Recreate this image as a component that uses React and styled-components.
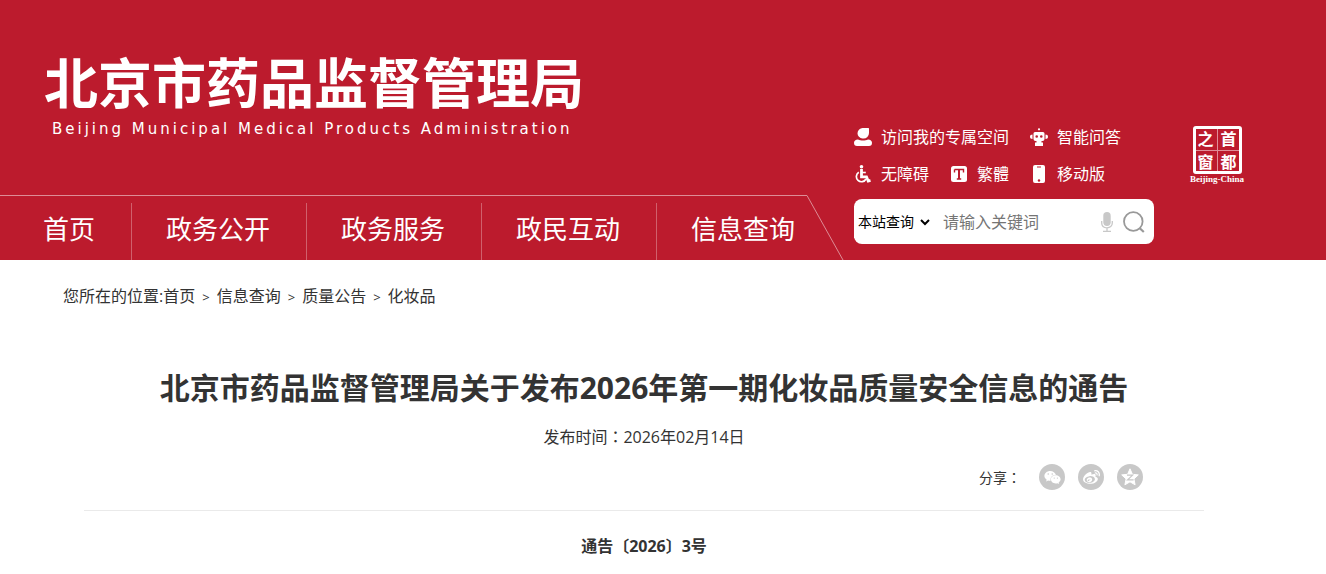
import React from "react";
import styled, { createGlobalStyle } from "styled-components";
import { FaWeibo, FaWeixin } from "react-icons/fa";

const navItems = ["首页", "政务公开", "政务服务", "政民互动", "信息查询"];

const crumbs = ["首页", "信息查询", "质量公告", "化妆品"];

const UserIcon = () => (
  <svg width="18" height="18" viewBox="0 0 18 18" fill="#fff" aria-hidden="true">
    <path d="M9 0h5.4c.4 0 .6.2.6.6V5a5.500 5.500 0 0 1-5.500 5.500H8.500A5.300 5.300 0 0 1 3.500 5.200 5.300 5.300 0 0 1 9 0z" />
    <path d="M4 11.500c1.500.7 3 1 5 1s3.500-.3 5-1c2.500.1 4 1.300 4 3.200 0 2.200-1 3.300-3 3.300H3c-2 0-3-1.100-3-3.300 0-1.900 1.500-3.100 4-3.200z" />
  </svg>
);

const RobotIcon = () => (
  <svg width="18" height="18" viewBox="0 0 18 18" fill="#fff" aria-hidden="true">
    <circle cx="9" cy="1.300" r="1.100" />
    <path
      fillRule="evenodd"
      d="M5 4h8a1.500 1.500 0 0 1 1.500 1.500V11a2 2 0 0 1-2 2h-7a2 2 0 0 1-2-2V5.500A1.500 1.500 0 0 1 5 4zm1.700 3.200a1.300 1.300 0 1 0 0 2.600 1.300 1.300 0 0 0 0-2.600zm4.600 0a1.300 1.300 0 1 0 0 2.600 1.300 1.300 0 0 0 0-2.600z"
    />
    <path d="M2.500 6.500v4.500C1 11 0 10 0 8.700s1-2.200 2.500-2.200zM15.500 6.500v4.500c1.500 0 2.500-1 2.500-2.300s-1-2.200-2.500-2.200zM6.500 13h5v1.500H13V18H5v-3.500h1.500z" />
  </svg>
);

const WheelchairIcon = () => (
  <svg width="18" height="18" viewBox="0 0 18 18" fill="none" stroke="#fff" aria-hidden="true">
    <circle cx="7.500" cy="1.800" r="1.800" fill="#fff" stroke="none" />
    <path d="M7.500 4v7.800h5l1.700 4.200 2.300-.7" strokeWidth="2.800" />
    <path d="M7.500 7.500h4.300" strokeWidth="1.600" />
    <path d="M4.800 7.300A5.100 5.100 0 1 0 12 14" strokeWidth="1.700" />
  </svg>
);

const TextIcon = () => (
  <svg width="18" height="18" viewBox="0 0 18 18" aria-hidden="true">
    <rect x="1" y="1" width="16" height="16" rx="2.500" fill="#fff" />
    <path
      d="M4.500 4.500h9v3M4.500 4.500v3M9 4.500v9.500M6.800 14h4.400"
      stroke="#bc1b2d"
      strokeWidth="1.400"
      fill="none"
    />
    <path d="M8 4.500h2V14H8z" fill="#bc1b2d" />
  </svg>
);

const PhoneIcon = () => (
  <svg width="18" height="18" viewBox="0 0 18 18" aria-hidden="true">
    <rect x="3" y="0" width="12" height="18" rx="2" fill="#fff" />
    <path d="M7 2h4" stroke="#bc1b2d" strokeWidth="1" />
    <circle cx="9" cy="15.500" r="1.200" fill="#bc1b2d" />
  </svg>
);

const MicIcon = () => (
  <svg width="12" height="20" viewBox="0 0 12 20" aria-hidden="true">
    <rect x="2.300" y="0" width="7.400" height="14" rx="3.700" fill="#c8c8c8" />
    <path
      d="M.7 9v2c0 3 2.300 4.800 5.300 4.800s5.300-1.800 5.300-4.800V9M6 16v3M2 19.300h8"
      stroke="#c8c8c8"
      strokeWidth="1.300"
      fill="none"
    />
  </svg>
);

const SearchIcon = () => (
  <svg width="22" height="22" viewBox="0 0 22 22" fill="none" stroke="#999" strokeWidth="1.800" aria-hidden="true">
    <circle cx="10.300" cy="10.500" r="9.300" />
    <path d="M16.500 17l4.300 4" strokeWidth="2.200" />
  </svg>
);

const QzoneIcon = () => (
  <svg width="18" height="18" viewBox="0 0 18 18" aria-hidden="true">
    <path
      d="M9 .8l2.400 5.500 5.900.6-4.400 4 1.200 5.900L9 13.800l-5.100 3 1.200-5.900-4.400-4 5.900-.6z"
      fill="#fff"
      stroke="#fff"
      strokeLinejoin="round"
    />
    <path d="M6 7.200h5.600L6.600 11.800h6" stroke="#c8c8c8" strokeWidth="1.200" fill="none" />
  </svg>
);

const tools = [
  [
    { label: "访问我的专属空间", icon: <UserIcon /> },
    { label: "智能问答", icon: <RobotIcon /> },
  ],
  [
    { label: "无障碍", icon: <WheelchairIcon /> },
    { label: "繁體", icon: <TextIcon /> },
    { label: "移动版", icon: <PhoneIcon /> },
  ],
];

const shares = [
  { label: "微信", icon: <FaWeixin size={17} /> },
  { label: "微博", icon: <FaWeibo size={17} /> },
  { label: "QQ空间", icon: <QzoneIcon /> },
];

const App = () => {
  return (
    <>
      <GlobalStyle />
      <Header>
        <Brand>
          <Logo href="#">
            <LogoName>北京市药品监督管理局</LogoName>
            <LogoSub>Beijing Municipal Medical Products Administration</LogoSub>
          </Logo>
          <Nav>
            <NavList>
              {navItems.map((item) => (
                <NavItem key={item}>
                  <a href="#">{item}</a>
                </NavItem>
              ))}
            </NavList>
            <svg width="38" height="65" viewBox="0 0 38 65" aria-hidden="true">
              <path d="M0 .5L36 65" stroke="#dd8d96" fill="none" />
            </svg>
          </Nav>
        </Brand>
        <Tools>
          {tools.map((row, i) => (
            <ToolRow key={i}>
              {row.map((tool) => (
                <ToolLink href="#" key={tool.label}>
                  {tool.icon}
                  {tool.label}
                </ToolLink>
              ))}
            </ToolRow>
          ))}
          <SearchForm onSubmit={(e) => e.preventDefault()}>
            <Scope aria-label="查询范围">
              <option>本站查询</option>
            </Scope>
            <Keyword type="text" placeholder="请输入关键词" aria-label="关键词" />
            <IconButton type="button" aria-label="语音">
              <MicIcon />
            </IconButton>
            <IconButton type="submit" aria-label="搜索">
              <SearchIcon />
            </IconButton>
          </SearchForm>
        </Tools>
        <Seal href="#">
          <SealGrid>
            <span>之</span>
            <span>首</span>
            <span>窗</span>
            <span>都</span>
          </SealGrid>
          <SealCaption>Beijing-China</SealCaption>
        </Seal>
      </Header>

      <Breadcrumb>
        您所在的位置:
        {crumbs.map((crumb, i) => (
          <React.Fragment key={crumb}>
            {i > 0 && <Arrow>&gt;</Arrow>}
            <a href="#">{crumb}</a>
          </React.Fragment>
        ))}
      </Breadcrumb>

      <Article>
        <Title>北京市药品监督管理局关于发布2026年第一期化妆品质量安全信息的通告</Title>
        <PublishTime>
          发布时间<Colon>：</Colon>2026年02月14日
        </PublishTime>
        <Share>
          <ShareLabel>
            分享<Colon>：</Colon>
          </ShareLabel>
          {shares.map((share) => (
            <ShareButton type="button" key={share.label} aria-label={share.label}>
              {share.icon}
            </ShareButton>
          ))}
        </Share>
        <DocNumber>通告〔2026〕3号</DocNumber>
      </Article>
    </>
  );
};

export default App;

const GlobalStyle = createGlobalStyle`
  * {
    box-sizing: border-box;
  }

  body {
    margin: 0;
    background: #fff;
    color: #333;
    font-family: "Open Sans", "Noto Sans CJK SC", sans-serif;
    font-size: 16px;
    line-height: 24px;
  }

  a {
    color: inherit;
    text-decoration: none;
  }

  svg {
    display: block;
    flex: none;
  }

  button, input, select {
    font-family: inherit;
  }
`;

const Header = styled.header`
  display: flex;
  background: #bc1b2d;
  color: #fff;
  white-space: nowrap;
`;

const Brand = styled.div`
  display: flex;
  flex-direction: column;
  justify-content: space-between;
  padding-top: 51px;
`;

const Logo = styled.a`
  display: block;
  padding-left: 44px;
`;

const LogoName = styled.div`
  font-size: 54px;
  font-weight: 700;
  line-height: 64px;
`;

const LogoSub = styled.div`
  padding-left: 8px;
  font-family: "DejaVu Sans", sans-serif;
  font-size: 15px;
  line-height: 28px;
  letter-spacing: 3px;
`;

const Nav = styled.nav`
  display: flex;
`;

const NavList = styled.ul`
  display: flex;
  height: 65px;
  margin: 0;
  padding: 7px 0 0;
  border-top: 1px solid #dd8d96;
  list-style: none;
`;

const NavItem = styled.li`
  padding: 0 36px 0 34px;
  border-right: 1px solid #d0606c;
  font-size: 26px;
  line-height: 52px;

  &:first-child {
    padding-left: 43px;
  }

  &:last-child {
    padding-right: 12px;
    border-right: 0;
  }
`;

const Tools = styled.div`
  width: 300px;
  margin-left: 9px;
  padding: 125px 0 16px;
`;

const ToolRow = styled.div`
  display: flex;
  gap: 21px;
  margin-bottom: 13px;
`;

const ToolLink = styled.a`
  display: flex;
  align-items: center;
  gap: 9px;
`;

const SearchForm = styled.form`
  display: flex;
  align-items: center;
  gap: 10px;
  height: 45px;
  padding-right: 9px;
  border-radius: 8px;
  background: #fff;
`;

const Scope = styled.select`
  width: 79px;
  height: 32px;
  padding: 0;
  border: 0;
  background: #fff;
  color: #000;
  font-size: 14px;
`;

const Keyword = styled.input`
  flex: 1;
  min-width: 0;
  padding: 0;
  border: 0;
  background: none;
  color: #333;
  font-size: 16px;
  line-height: 24px;

  &::placeholder {
    color: #757575;
  }
`;

const IconButton = styled.button`
  padding: 0;
  border: 0;
  background: none;
  cursor: pointer;
`;

const Seal = styled.a`
  display: flex;
  flex-direction: column;
  align-items: center;
  margin-left: 36px;
  padding-top: 126px;
`;

const SealGrid = styled.span`
  display: grid;
  grid-template-columns: 1fr 1fr;
  gap: 3px;
  width: 49px;
  height: 48px;
  border: 3px solid #fff;
  border-radius: 3px;
  background: linear-gradient(#e08d97, #e08d97) center / 1px 100% no-repeat,
    linear-gradient(#e08d97, #e08d97) center / 100% 1px no-repeat;
  font-size: 16px;
  font-weight: 700;
  line-height: 20px;
  text-align: center;
`;

const SealCaption = styled.span`
  font-family: "Liberation Serif", serif;
  font-size: 9px;
  font-weight: 700;
  line-height: 10px;
`;

const Breadcrumb = styled.nav`
  padding: 24px 63px 0;
`;

const Arrow = styled.span`
  margin: 0 7px;
  font-size: 13px;
`;

const Article = styled.main`
  padding: 57px 122px 0 84px;
  text-align: center;
`;

const Title = styled.h1`
  margin: 0;
  font-size: 30px;
  font-weight: 700;
  line-height: 44px;
`;

const PublishTime = styled.p`
  margin: 14px 0 0;
`;

/* full-width colon centred in its cell */
const Colon = styled.span`
  font-family: "Noto Sans CJK TC", sans-serif;
`;

const Share = styled.div`
  display: flex;
  align-items: center;
  justify-content: flex-end;
  gap: 13px;
  padding: 15px 61px 20px 0;
  border-bottom: 1px solid #eaeaea;
`;

const ShareLabel = styled.span`
  margin-right: 5px;
  font-size: 14px;
`;

const ShareButton = styled.button`
  display: flex;
  align-items: center;
  justify-content: center;
  width: 26px;
  height: 26px;
  padding: 0;
  border: 0;
  border-radius: 50%;
  background: #c8c8c8;
  color: #fff;
  cursor: pointer;
`;

const DocNumber = styled.p`
  margin: 23px 0 0;
  font-weight: 700;
`;
